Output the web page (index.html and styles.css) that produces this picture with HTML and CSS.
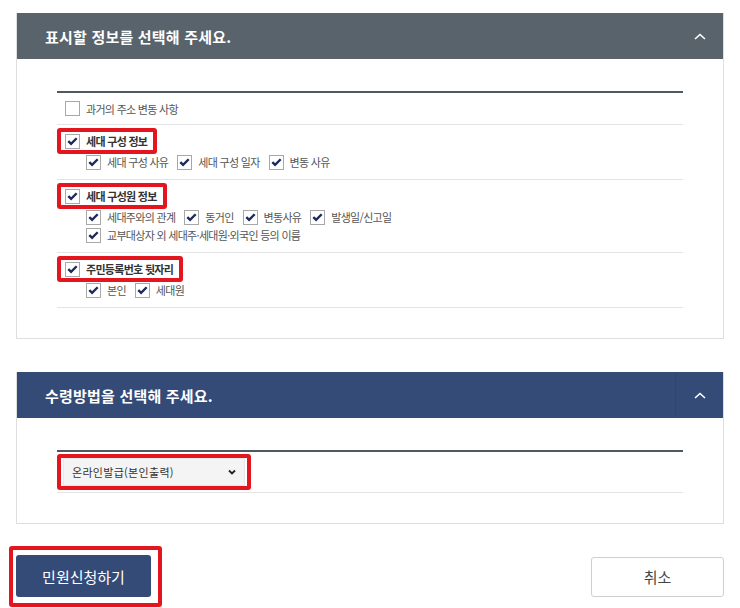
FILE: index.html
```html
<!DOCTYPE html>
<html lang="ko">
  <head>
    <meta charset="UTF-8" />
    <meta name="viewport" content="width=device-width, initial-scale=1.0" />
    <title>민원신청</title>
    <link rel="stylesheet" href="styles.css">
  </head>
  <body>
    <div class="page">
      <!-- 표시할 정보 -->
      <section class="panel">
        <div class="panel-head gray">
          <h2>표시할 정보를 선택해 주세요.</h2>
          <span class="toggle">
            <svg width="12" height="7" viewBox="0 0 12 7"><polyline points="1,6 6,1.5 11,6" fill="none" stroke="#fff" stroke-width="1.6"/></svg>
          </span>
        </div>
        <div class="panel-body">
          <div class="list">
            <div class="row single">
              <label class="item"><span class="box"></span>과거의 주소 변동 사항</label>
            </div>

            <div class="row">
              <label class="item title mark"><span class="box on"><svg viewBox="0 0 14 14"><polyline points="2.5,6.5 5.5,9.5 11.5,3.5"/></svg></span>세대 구성 정보</label>
              <div class="subs">
                <div class="sub-line">
                  <label class="item"><span class="box on"><svg viewBox="0 0 14 14"><polyline points="2.5,6.5 5.5,9.5 11.5,3.5"/></svg></span>세대 구성 사유</label>
                  <label class="item"><span class="box on"><svg viewBox="0 0 14 14"><polyline points="2.5,6.5 5.5,9.5 11.5,3.5"/></svg></span>세대 구성 일자</label>
                  <label class="item"><span class="box on"><svg viewBox="0 0 14 14"><polyline points="2.5,6.5 5.5,9.5 11.5,3.5"/></svg></span>변동 사유</label>
                </div>
              </div>
            </div>

            <div class="row">
              <label class="item title mark"><span class="box on"><svg viewBox="0 0 14 14"><polyline points="2.5,6.5 5.5,9.5 11.5,3.5"/></svg></span>세대 구성원 정보</label>
              <div class="subs">
                <div class="sub-line">
                  <label class="item"><span class="box on"><svg viewBox="0 0 14 14"><polyline points="2.5,6.5 5.5,9.5 11.5,3.5"/></svg></span>세대주와의 관계</label>
                  <label class="item"><span class="box on"><svg viewBox="0 0 14 14"><polyline points="2.5,6.5 5.5,9.5 11.5,3.5"/></svg></span>동거인</label>
                  <label class="item"><span class="box on"><svg viewBox="0 0 14 14"><polyline points="2.5,6.5 5.5,9.5 11.5,3.5"/></svg></span>변동사유</label>
                  <label class="item"><span class="box on"><svg viewBox="0 0 14 14"><polyline points="2.5,6.5 5.5,9.5 11.5,3.5"/></svg></span>발생일/신고일</label>
                </div>
                <div class="sub-line">
                  <label class="item"><span class="box on"><svg viewBox="0 0 14 14"><polyline points="2.5,6.5 5.5,9.5 11.5,3.5"/></svg></span>교부대상자 외 세대주·세대원·외국인 등의 이름</label>
                </div>
              </div>
            </div>

            <div class="row">
              <label class="item title mark"><span class="box on"><svg viewBox="0 0 14 14"><polyline points="2.5,6.5 5.5,9.5 11.5,3.5"/></svg></span>주민등록번호 뒷자리</label>
              <div class="subs">
                <div class="sub-line">
                  <label class="item"><span class="box on"><svg viewBox="0 0 14 14"><polyline points="2.5,6.5 5.5,9.5 11.5,3.5"/></svg></span>본인</label>
                  <label class="item"><span class="box on"><svg viewBox="0 0 14 14"><polyline points="2.5,6.5 5.5,9.5 11.5,3.5"/></svg></span>세대원</label>
                </div>
              </div>
            </div>
          </div>
        </div>
      </section>

      <!-- 수령방법 -->
      <section class="panel second">
        <div class="panel-head navy">
          <h2>수령방법을 선택해 주세요.</h2>
          <span class="toggle split">
            <svg width="12" height="7" viewBox="0 0 12 7"><polyline points="1,6 6,1.5 11,6" fill="none" stroke="#fff" stroke-width="1.6"/></svg>
          </span>
        </div>
        <div class="panel-body">
          <div class="list">
            <div class="row select-row">
              <div class="mark select-mark">
                <div class="select-wrap">
                  <select class="receive">
                    <option>온라인발급(본인출력)</option>
                  </select>
                  <svg class="caret" width="8" height="6" viewBox="0 0 8 6"><polyline points="1,1.5 4,4.5 7,1.5" fill="none" stroke="#222" stroke-width="1.8"/></svg>
                </div>
              </div>
            </div>
          </div>
        </div>
      </section>

      <div class="actions">
        <div class="mark btn-mark">
          <button class="btn primary">민원신청하기</button>
        </div>
        <button class="btn cancel">취소</button>
      </div>
    </div>
  </body>
</html>
```

FILE: styles.css
```css
body {
  margin: 0;
  background: #fff;
  font-family: "Noto Sans CJK KR", "Noto Sans", sans-serif;
  color: #444;
}
.page {
  width: 708px;
  padding: 13px 16px 0;
}
.panel {
  border: 1px solid #dedede;
  border-top: none;
}
.panel.second {
  margin-top: 33px;
}
.panel-head {
  height: 46px;
  display: flex;
  align-items: center;
  justify-content: space-between;
  padding-left: 28px;
}
.panel-head.gray {
  background: #58636b;
}
.panel-head.navy {
  background: #344b78;
}
.panel-head h2 {
  margin: 0;
  font-size: 15px;
  font-weight: 700;
  color: #fff;
  letter-spacing: 0.2px;
}
.toggle {
  width: 47px;
  height: 46px;
  display: flex;
  align-items: center;
  justify-content: center;
}
.toggle.split {
  border-left: 1px solid rgba(0, 0, 0, 0.06);
}
.panel-body {
  padding: 32px 40px 30px;
}
.list {
  border-top: 2px solid #4e5861;
}
.row {
  border-bottom: 1px solid #e4e4e4;
  padding: 3px 0 9px;
  display: flex;
  flex-direction: column;
  align-items: flex-start;
}
.row.single {
  height: 31px;
  padding: 0 0 0 8px;
  justify-content: center;
}
.item {
  display: inline-flex;
  align-items: center;
  font-size: 11px;
  letter-spacing: -0.7px;
  color: #555;
  line-height: 16px;
  white-space: nowrap;
}
.box {
  width: 13px;
  height: 13px;
  border: 1px solid #a8a8a8;
  background: #fff;
  margin-right: 6px;
  display: inline-block;
  flex: none;
}
.box svg {
  width: 13px;
  height: 13px;
  display: block;
}
.box svg polyline {
  fill: none;
  stroke: #1c2a5c;
  stroke-width: 2.6;
}
.mark {
  border: 4px solid #e3161f;
  border-radius: 3px;
}
.item.title {
  height: 18px;
  padding: 0 6px 0 4px;
  font-weight: 700;
  color: #333;
}
.subs {
  padding-left: 29px;
  display: flex;
  flex-direction: column;
  gap: 2px;
}
.sub-line {
  display: flex;
  gap: 9px;
}
.select-row {
  padding: 2px 0 2px;
}
.select-mark {
  padding: 0 2px;
}
.select-wrap {
  position: relative;
  margin: 0;
}
.receive {
  appearance: none;
  -webkit-appearance: none;
  width: 182px;
  height: 28px;
  border: 1px solid #e8e8e8;
  border-radius: 0;
  background: #f4f4f4;
  font-family: inherit;
  font-size: 11px;
  letter-spacing: 0.3px;
  color: #333;
  padding: 0 8px;
  display: block;
}
.caret {
  position: absolute;
  right: 9px;
  top: 11px;
}
.actions {
  margin-top: 22px;
  display: flex;
  justify-content: space-between;
  align-items: center;
}
.btn-mark {
  margin-left: -7px;
  padding: 5px 7px 6px 3px;
}
.btn {
  font-family: inherit;
  font-size: 15px;
  cursor: pointer;
}
.btn.primary {
  width: 135px;
  height: 42px;
  border: none;
  border-radius: 3px;
  background: #344b78;
  color: #fff;
}
.btn.cancel {
  width: 133px;
  height: 40px;
  border: 1px solid #cfcfcf;
  border-radius: 3px;
  background: #fff;
  color: #444;
}
```
